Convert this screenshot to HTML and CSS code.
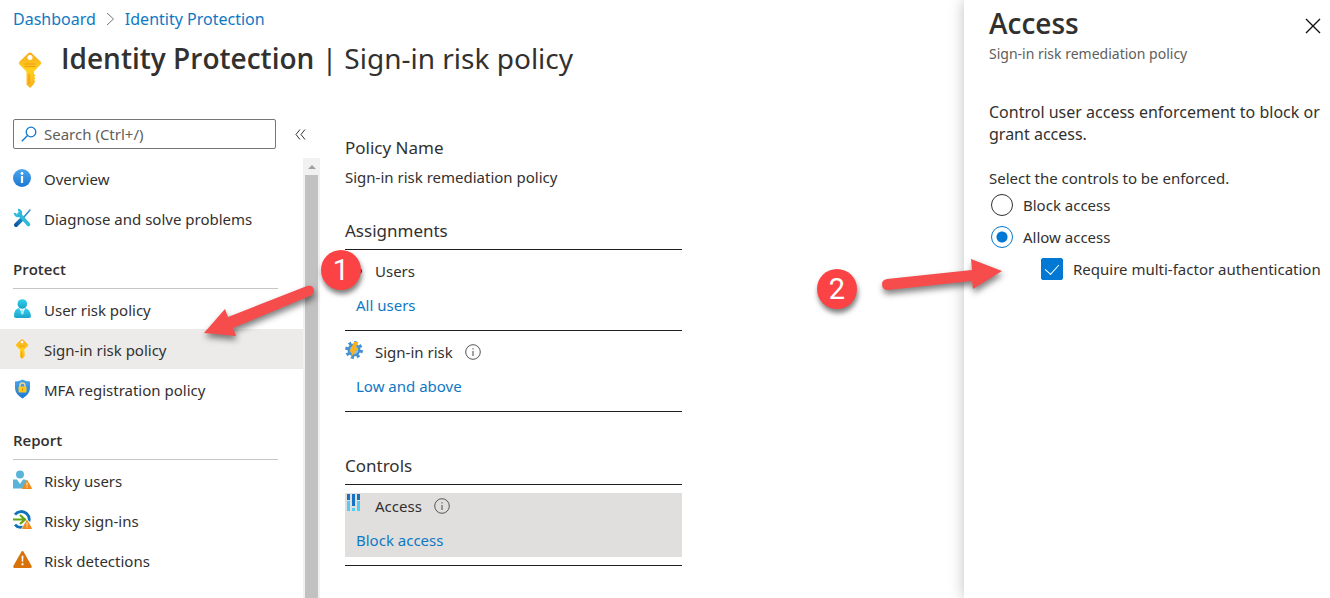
FILE: index.html
```html
<!DOCTYPE html>
<html lang="en">
<head>
    <meta charset="UTF-8">
    <meta name="viewport" content="width=device-width, initial-scale=1.0">
    <title>Identity Protection | Sign-in risk policy</title>
    <link rel="stylesheet" href="styles.css">
</head>
<body>
    <!-- Shared gradients and symbols -->
    <svg class="defs" width="0" height="0" aria-hidden="true">
        <defs>
            <linearGradient id="gold" x1="0" y1="0" x2="0" y2="1">
                <stop offset="0" stop-color="#f8a91e"/>
                <stop offset="0.5" stop-color="#ffd01a"/>
                <stop offset="1" stop-color="#fbb01c"/>
            </linearGradient>
            <linearGradient id="blue" x1="0" y1="0" x2="0" y2="1">
                <stop offset="0" stop-color="#4ba6ee"/>
                <stop offset="1" stop-color="#1c78d2"/>
            </linearGradient>
            <linearGradient id="cyan" x1="0" y1="0" x2="0" y2="1">
                <stop offset="0" stop-color="#32d0ee"/>
                <stop offset="1" stop-color="#1ba3c8"/>
            </linearGradient>
            <linearGradient id="steel" gradientUnits="userSpaceOnUse" x1="17" y1="2" x2="2" y2="18">
                <stop offset="0" stop-color="#3a8fd0"/>
                <stop offset="0.5" stop-color="#1c8fc8"/>
                <stop offset="1" stop-color="#0b4f9c"/>
            </linearGradient>
            <symbol id="key" viewBox="0 0 24 36">
                <path d="M10.500 1Q12 0 13.500 1L22.500 9.500Q24 11 22.500 12.500L16 19.500V22L17.500 23.500L16 25L17.500 26.500L16 28L17.500 29.500L16 31V32L12.500 35.500Q12 36 11.500 35.500L8.500 32.500V19.500L1.500 12.500Q0 11 1.500 9.500Z" fill="url(#gold)"/>
                <circle cx="12" cy="5.500" r="2.500" fill="#fff"/>
                <path d="M6.500 12H17.500M6.500 14.500H17.500M11 22V32" stroke="#f09a17" stroke-width="1.200" fill="none"/>
            </symbol>
            <symbol id="info" viewBox="0 0 16 16">
                <circle cx="8" cy="8" r="7.300" fill="none" stroke="#555" stroke-width="1"/>
                <path d="M8 7V12M8 4.300V5.600" stroke="#555" stroke-width="1.100"/>
            </symbol>
            <symbol id="warning" viewBox="0 0 20 18">
                <path d="M8.800 0.800Q10 -0.600 11.200 0.800L19.700 16Q20 18 18.500 18H1.500Q0 18 0.300 16Z"/>
                <path d="M9 5H11L10.700 11.500H9.300ZM9 13H11V15H9Z" fill="#fff"/>
            </symbol>
        </defs>
    </svg>

    <div class="page">
        <main class="blade">
            <header class="blade-header">
                <nav class="breadcrumb" aria-label="Breadcrumb">
                    <a href="#">Dashboard</a>
                    <svg width="9" height="14" viewBox="0 0 9 14"><path d="M1 1L7.500 7L1 13" fill="none" stroke="#777" stroke-width="1"/></svg>
                    <a href="#">Identity Protection</a>
                </nav>
                <div class="title-row">
                    <svg class="title-icon" width="24" height="36"><use href="#key"/></svg>
                    <h1><strong>Identity Protection</strong> | Sign-in risk policy</h1>
                </div>
            </header>

            <div class="blade-body">
                <!-- Side menu -->
                <aside class="sidebar">
                    <div class="search-row">
                        <div class="search">
                            <svg width="16" height="16" viewBox="0 0 16 16"><circle cx="10" cy="6" r="4.800" fill="none" stroke="#0f78cf" stroke-width="1.300"/><path d="M6.500 9.500L0.800 15.200" stroke="#0f78cf" stroke-width="1.300"/></svg>
                            <input type="text" placeholder="Search (Ctrl+/)" aria-label="Search">
                        </div>
                        <button class="collapse" type="button" aria-label="Collapse menu">
                            <svg width="11" height="11" viewBox="0 0 11 11"><path d="M5 0.500L1 5.500L5 10.500M10 0.500L6 5.500L10 10.500" fill="none" stroke="#333" stroke-width="1"/></svg>
                        </button>
                    </div>
                    <div class="menu-scroll">
                        <nav class="menu" aria-label="Menu">
                            <a class="menu-item" href="#">
                                <svg width="20" height="20" viewBox="0 0 20 20"><circle cx="9" cy="10" r="9" fill="url(#blue)"/><circle cx="9" cy="5.500" r="1.400" fill="#fff"/><path d="M7.900 8H10.100V15H7.900Z" fill="#fff"/></svg>
                                Overview
                            </a>
                            <a class="menu-item" href="#">
                                <svg width="20" height="20" viewBox="0 0 20 20">
                                    <path d="M17 2L10.500 9.500" stroke="url(#steel)" stroke-width="1.600" stroke-linecap="round"/>
                                    <path d="M9 11L3 17" stroke="url(#steel)" stroke-width="4" stroke-linecap="round"/>
                                    <path d="M6 6L15.500 16.500" stroke="#2fb9da" stroke-width="3.600" stroke-linecap="round"/>
                                    <path d="M5 2A3 3 0 1 1 2 5" fill="none" stroke="#2fb9da" stroke-width="2.400"/>
                                </svg>
                                Diagnose and solve problems
                            </a>
                            <h2>Protect</h2>
                            <a class="menu-item" href="#">
                                <svg width="20" height="20" viewBox="0 0 20 20">
                                    <path d="M1 17Q1 10 6 9H12Q17 10 18 17Q18 19 16 19H3Q1 19 1 17Z" fill="url(#cyan)"/>
                                    <path d="M6 9H12.500L9.300 15Z" fill="#fff"/><path d="M8.500 10.500H10L11 14L9.300 16L7.500 14Z" fill="#a6e7f5"/>
                                    <circle cx="9.300" cy="5" r="4.800" fill="url(#cyan)"/>
                                </svg>
                                User risk policy
                            </a>
                            <a class="menu-item selected" href="#" aria-current="page">
                                <svg width="20" height="20" viewBox="0 0 20 20"><use href="#key" x="2" y="0" width="14" height="20"/></svg>
                                Sign-in risk policy
                            </a>
                            <a class="menu-item" href="#">
                                <svg width="20" height="20" viewBox="0 0 20 20">
                                    <path d="M9.500 0.500Q13 2.500 17 2.500V9Q17 15 9.500 19.500Q2 15 2 9V2.500Q6 2.500 9.500 0.500Z" fill="url(#blue)"/>
                                    <path d="M7 8V6.500Q7 4 9.500 4Q12 4 12 6.500V8" fill="none" stroke="#e8d797" stroke-width="1.400"/>
                                    <rect x="5.500" y="7.500" width="8" height="6" rx="1" fill="#ffc91c"/>
                                    <path d="M9.500 9.500V11.800" stroke="#d58910"/>
                                </svg>
                                MFA registration policy
                            </a>
                            <h2>Report</h2>
                            <a class="menu-item" href="#">
                                <svg width="20" height="20" viewBox="0 0 20 20">
                                    <circle cx="7" cy="4.500" r="4" fill="#59b4d9"/><path d="M0 9.500H4L7 14L10 9.500H12L14 11L10 18.500H0Z" fill="#59b4d9"/>
                                    <use href="#warning" x="9" y="10" width="10" height="9" fill="#ef8b1e"/>
                                </svg>
                                Risky users
                            </a>
                            <a class="menu-item" href="#">
                                <svg width="20" height="20" viewBox="0 0 20 20">
                                    <path d="M2 4.500A8 8 0 1 1 2 14.500" fill="none" stroke="#1072ba" stroke-width="2.800"/>
                                    <path d="M0 9.500H11M7 5L12 9.500L7 14" fill="none" stroke="#63a410" stroke-width="2.200"/>
                                    <path d="M14 9L8 19H20V15Z" fill="#fff"/>
                                    <use href="#warning" x="9" y="10" width="10" height="9" fill="#ef8b1e"/>
                                </svg>
                                Risky sign-ins
                            </a>
                            <a class="menu-item" href="#">
                                <svg width="20" height="20" viewBox="0 0 20 20"><use href="#warning" x="0" y="1" width="19" height="17" fill="#d8730b"/></svg>
                                Risk detections
                            </a>
                        </nav>
                        <div class="scrollbar" aria-hidden="true">
                            <span class="scroll-up"></span>
                            <span class="scroll-thumb"></span>
                        </div>
                    </div>
                    <div class="callout callout-one">1</div>
                    <svg class="arrow arrow-one" width="120" height="60" viewBox="0 0 120 60" aria-hidden="true">
                        <path d="M4 48L25 24L28 32L107 1Q114 0 114 6Q114 9 110 11L33 43L36 51Z" fill="#f64c4c"/>
                    </svg>
                </aside>

                <!-- Policy settings -->
                <section class="policy">
                    <h3>Policy Name</h3>
                    <p class="policy-name">Sign-in risk remediation policy</p>

                    <h3 class="group-title">Assignments</h3>
                    <div class="setting">
                        <div class="setting-body">
                            <div class="setting-head">
                                <svg width="18" height="18" viewBox="0 0 18 18"><circle cx="6" cy="7" r="3" fill="#4b69b1"/><path d="M1 17Q1 11 6 11Q11 11 11 17Z" fill="#4b69b1"/><circle cx="14" cy="13" r="3" fill="#3b4f9a"/></svg>
                                <span>Users</span>
                            </div>
                            <a href="#">All users</a>
                        </div>
                    </div>
                    <div class="setting">
                        <div class="setting-body">
                            <div class="setting-head">
                                <svg width="18" height="20" viewBox="0 0 18 20">
                                    <circle cx="9" cy="11" r="6.500" fill="#3f8fd2"/>
                                    <circle cx="9" cy="11" r="7.500" fill="none" stroke="#3f8fd2" stroke-width="2.800" stroke-dasharray="2.950 2.940"/>
                                    <circle cx="9" cy="11" r="4.300" fill="#8fc0e8"/>
                                    <path d="M9 3H13.500L10.500 9H13.500L5.500 19L7.500 12.500H4.500Z" fill="#fbb117"/>
                                </svg>
                                <span>Sign-in risk</span>
                                <svg width="16" height="16"><use href="#info"/></svg>
                            </div>
                            <a href="#">Low and above</a>
                        </div>
                    </div>

                    <h3 class="group-title controls-title">Controls</h3>
                    <div class="setting">
                        <div class="setting-body active">
                            <div class="setting-head">
                                <svg width="18" height="18" viewBox="0 0 18 18">
                                    <path d="M2 1H5V7H2ZM7 1H10V13H7ZM12 1H15V7H12Z" fill="#1672c4"/>
                                    <path d="M2 8H5V18H2ZM7 15H10V18H7ZM12 8H15V18H12Z" fill="#50cdf0"/>
                                </svg>
                                <span>Access</span>
                                <svg width="16" height="16"><use href="#info"/></svg>
                            </div>
                            <a href="#">Block access</a>
                        </div>
                    </div>
                </section>
            </div>
        </main>

        <!-- Access panel -->
        <aside class="panel">
            <div class="panel-header">
                <div>
                    <h2>Access</h2>
                    <p>Sign-in risk remediation policy</p>
                </div>
                <button class="close" type="button" aria-label="Close">
                    <svg width="16" height="16" viewBox="0 0 16 16"><path d="M1 1L15 15M15 1L1 15" stroke="#111" stroke-width="1.400"/></svg>
                </button>
            </div>
            <p class="panel-text">Control user access enforcement to block or grant access.</p>
            <form>
                <fieldset>
                    <legend>Select the controls to be enforced.</legend>
                    <label><input type="radio" name="access" value="block"> Block access</label>
                    <label><input type="radio" name="access" value="allow" checked> Allow access</label>
                    <label class="nested"><input type="checkbox" name="mfa" checked> Require multi-factor authentication</label>
                </fieldset>
            </form>
            <div class="callout callout-two">2</div>
            <svg class="arrow arrow-two" width="124" height="40" viewBox="0 0 124 40" aria-hidden="true">
                <path d="M7 22L92 13L91 2L122 14L93 32L92 24L8 33Q2 33 2 27Q2 23 7 22Z" fill="#f64c4c"/>
            </svg>
        </aside>
    </div>
</body>
</html>
```
FILE: styles.css
```css
* {
    box-sizing: border-box;
}
body {
    margin: 0;
    font-family: "Noto Sans", "Open Sans", sans-serif;
    font-size: 15px;
    line-height: 24px;
    color: #323130;
    background: #fff;
}
h1, h2, h3, p {
    margin: 0;
}
a {
    color: #0f78c4;
    text-decoration: none;
}
button {
    padding: 0;
    border: none;
    background: none;
    cursor: pointer;
}
svg {
    flex: none;
}
h1 strong, h2 {
    font-family: "Open Sans", "Noto Sans", sans-serif;
    font-weight: 600;
}
.defs {
    position: absolute;
}
.page {
    display: flex;
    height: 100vh;
    overflow: hidden;
}

/* Main blade */
.blade {
    flex: 1;
    display: flex;
    flex-direction: column;
    min-width: 0;
}
.blade-header {
    padding: 7px 13px 0;
}
.breadcrumb {
    display: flex;
    align-items: center;
    gap: 10px;
    font-size: 16px;
}
.title-row {
    display: flex;
    align-items: center;
    gap: 19px;
    height: 56px;
    padding-left: 5px;
}
.title-icon {
    margin-top: 22px;
}
h1 {
    padding-bottom: 2px;
    font-size: 28px;
    line-height: 54px;
    font-weight: 400;
    white-space: nowrap;
}
.blade-body {
    flex: 1;
    display: flex;
    gap: 25px;
    min-height: 0;
    padding-top: 32px;
}

/* Side menu */
.sidebar {
    position: relative;
    flex: none;
    display: flex;
    flex-direction: column;
    width: 320px;
}
.search-row {
    display: flex;
    justify-content: space-between;
    padding: 0 14px 9px 13px;
}
.search {
    display: flex;
    align-items: center;
    gap: 7px;
    width: 263px;
    height: 30px;
    padding: 0 7px;
    border: 1px solid #767676;
    border-radius: 2px;
}
.search input {
    flex: 1;
    min-width: 0;
    padding: 0;
    border: none;
    outline: none;
    font: inherit;
}
.search input::placeholder {
    color: #605e5c;
}
.collapse {
    display: flex;
    align-items: center;
}
.menu-scroll {
    flex: 1;
    display: flex;
    min-height: 0;
}
.menu {
    flex: 1;
    overflow: hidden;
}
.menu-item {
    display: flex;
    align-items: center;
    gap: 11px;
    height: 40px;
    padding: 2px 0 0 13px;
    color: #323130;
}
.menu-item svg {
    margin-bottom: 2px;
}
.menu-item.selected {
    background: #edebe9;
}
.menu h2 {
    height: 51px;
    margin: 0 25px 0 13px;
    padding-top: 19px;
    border-bottom: 1px solid #c8c6c4;
    font-size: 15px;
}
.scrollbar {
    display: flex;
    flex-direction: column;
    width: 17px;
    background: #f1f1f1;
}
.scroll-up {
    height: 17px;
    padding: 7px 5px;
}
.scroll-up::before {
    content: "";
    display: block;
    border: 4px solid transparent;
    border-top: none;
    border-bottom-color: #a0a0a0;
}
.scroll-thumb {
    flex: 1;
    margin: 0 2px;
    background: #c1c1c1;
}

/* Policy settings */
.policy {
    flex: 1;
    max-width: 337px;
    padding-top: 17px;
}
.policy h3 {
    font-size: 17px;
    font-weight: 400;
}
.policy-name {
    padding-top: 5px;
}
.policy .group-title {
    padding: 30px 0 6px;
    border-bottom: 1px solid #201f1e;
}
.policy .controls-title {
    padding-top: 42px;
}
.setting {
    padding: 8px 0;
    border-bottom: 1px solid #201f1e;
}
.setting-body {
    height: 64px;
}
.setting-body.active {
    background: #e1dfdd;
}
.setting-head {
    display: flex;
    align-items: center;
    gap: 12px;
    height: 25px;
    margin-bottom: 10px;
}
.setting-head svg:first-child {
    align-self: flex-start;
}
.setting-body a {
    padding-left: 11px;
}

/* Access panel */
.panel {
    position: relative;
    flex: none;
    width: 366px;
    padding: 7px 0 0 25px;
    background: #fff;
    box-shadow: 0 0 14px rgba(0, 0, 0, 0.25);
}
.panel-header {
    display: flex;
    justify-content: space-between;
    align-items: flex-start;
}
.panel-header h2 {
    font-size: 28px;
    line-height: 32px;
}
.panel-header p {
    padding-top: 3px;
    font-size: 14px;
    color: #605e5c;
}
.close {
    display: flex;
    padding: 11px 9px;
}
.panel-text {
    padding: 35px 0 22px;
    font-size: 16px;
    line-height: 22px;
}
fieldset {
    display: flex;
    flex-direction: column;
    margin: 0;
    padding: 0;
    border: none;
}
legend {
    padding: 0;
    line-height: 22px;
}
fieldset label {
    display: flex;
    align-items: center;
    gap: 10px;
    height: 32px;
    white-space: nowrap;
}
fieldset .nested {
    padding-left: 50px;
}
fieldset input {
    appearance: none;
    flex: none;
    width: 22px;
    height: 22px;
    margin: 0 0 0 2px;
    border: 1px solid #323130;
    border-radius: 50%;
}
input[type="radio"]:checked {
    border-color: #0078d4;
    background: radial-gradient(circle, #0078d4 5px, #fff 6px);
}
input[type="checkbox"] {
    display: flex;
    justify-content: center;
    align-items: center;
    border-radius: 2px;
}
input[type="checkbox"]:checked {
    border-color: #0078d4;
    background: #0078d4;
}
input[type="checkbox"]:checked::before {
    content: "";
    width: 7px;
    height: 12px;
    margin-bottom: 4px;
    border: solid #fff;
    border-width: 0 1px 1px 0;
    transform: rotate(42deg);
}

/* Numbered callouts */
.callout {
    position: absolute;
    z-index: 2;
    width: 40px;
    height: 40px;
    border-radius: 50%;
    background: #fb4345;
    box-shadow: 1px 4px 5px rgba(0, 0, 0, 0.5);
    color: #fff;
    font-family: Roboto, "Liberation Sans", sans-serif;
    font-size: 29px;
    line-height: 40px;
    text-align: center;
}
.callout-one {
    top: 131px;
    left: 321px;
}
.callout-two {
    top: 269px;
    left: -147px;
}
.arrow {
    position: absolute;
    z-index: 1;
    overflow: visible;
    filter: drop-shadow(1px 4px 3px rgba(0, 0, 0, 0.5));
}
.arrow-one {
    top: 166px;
    left: 200px;
}
.arrow-two {
    top: 257px;
    left: -84px;
}
```
